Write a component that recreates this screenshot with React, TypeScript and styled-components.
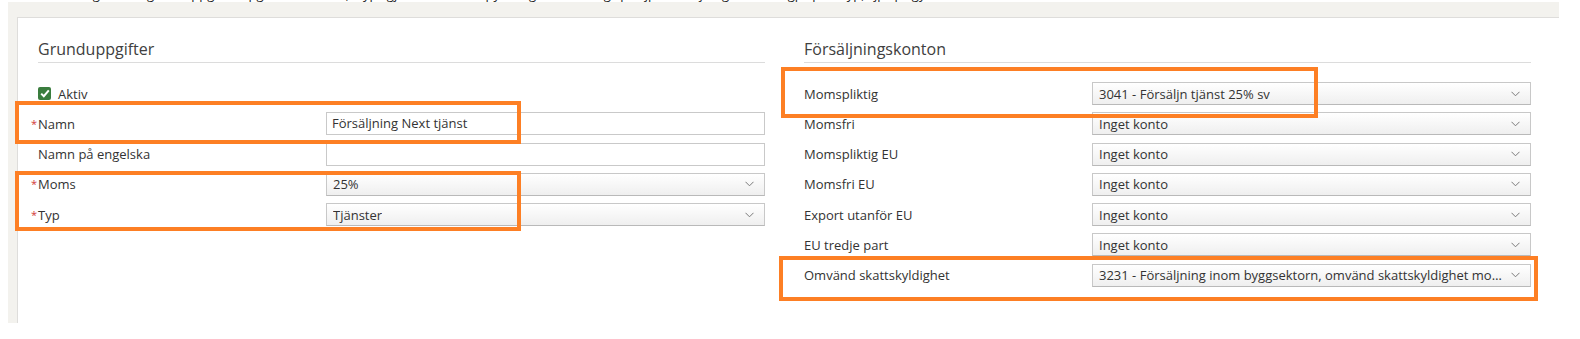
import React from "react";
import styled, { createGlobalStyle } from "styled-components";

const GlobalStyle = createGlobalStyle`
    body {
        margin: 0;
        background: #ffffff;
        font-family: "Open Sans", "Liberation Sans", sans-serif;
        color: #333333;
    }
`;

const Page = styled.div`
    position: relative;
    width: 1580px;
    height: 339px;
    overflow: hidden;
`;

const CutLine = styled.div`
    height: 2px;
    overflow: hidden;
    padding-left: 46px;

    span {
        display: block;
        margin-top: -14px;
        font-size: 13px;
        line-height: 16px;
        color: #222;
        white-space: nowrap;
        word-spacing: 6px;
    }
`;

const Backdrop = styled.div`
    margin-left: 8px;
    width: 1551px;
    height: 321px;
    box-sizing: border-box;
    padding: 15px 0 0 9px;
    background: #f3f2ee;
    display: flex;
`;

const Panel = styled.div`
    flex: 1;
    background: #ffffff;
    border-top: 1px solid #dedddb;
    border-left: 1px solid #dedddb;
    padding: 21px 0 0 20px;
    display: flex;
    gap: 39px;
`;

const Column = styled.div`
    width: 727px;
    display: flex;
    flex-direction: column;
`;

const Heading = styled.h2`
    margin: 0 0 19px;
    padding-bottom: 3px;
    border-bottom: 1px solid #dcdcdc;
    font-size: 16px;
    line-height: 20px;
    font-weight: 400;
    color: #404040;
`;

const Rows = styled.div`
    display: flex;
    flex-direction: column;
    gap: 7.3px;
`;

const Row = styled.div`
    display: grid;
    grid-template-columns: 288px minmax(0, 1fr);
    align-items: center;
    height: 23px;
`;

const Label = styled.span<{ $required?: boolean }>`
    position: relative;
    font-size: 13px;
    color: #333;

    &::before {
        content: ${(p) => (p.$required ? '"*"' : "none")};
        position: absolute;
        left: -7px;
        top: 1px;
        color: #d23a3a;
        font-size: 11px;
    }
`;

const CheckRow = styled.label`
    display: flex;
    align-items: center;
    gap: 7px;
    height: 23px;
    font-size: 13px;
    color: #333;
`;

const CheckBox = styled.span`
    width: 13px;
    height: 13px;
    border-radius: 2px;
    background: #3a7d3e;
    display: flex;
    align-items: center;
    justify-content: center;
`;

const TextInput = styled.div`
    height: 23px;
    box-sizing: border-box;
    border: 1px solid #c9c9c9;
    background: #fff;
    padding: 0 5px;
    font-size: 13px;
    line-height: 21px;
    color: #333;
`;

const SelectBox = styled.div`
    min-width: 0;
    height: 23px;
    box-sizing: border-box;
    border: 1px solid #c8c8c8;
    border-bottom-color: #b9b9b9;
    background: linear-gradient(#ffffff, #efefef);
    padding: 0 10px 0 6px;
    display: flex;
    align-items: center;
    justify-content: space-between;
    gap: 6px;
    font-size: 13px;
    color: #333;

    span {
        min-width: 0;
        overflow: hidden;
        white-space: nowrap;
        text-overflow: ellipsis;
    }

    svg {
        flex-shrink: 0;
    }
`;

const Annotation = styled.div<{ $x: number; $y: number; $w: number; $h: number }>`
    position: absolute;
    left: ${(p) => p.$x}px;
    top: ${(p) => p.$y}px;
    width: ${(p) => p.$w}px;
    height: ${(p) => p.$h}px;
    box-sizing: border-box;
    border: 4px solid #fd7f24;
    pointer-events: none;
`;

const Chevron = () => (
    <svg width="9" height="6" viewBox="0 0 9 6">
        <polyline points="0.5,0.8 4.5,4.8 8.5,0.8" fill="none" stroke="#7a7a7a" strokeWidth="1" />
    </svg>
);

const Check = () => (
    <svg width="10" height="9" viewBox="0 0 10 9">
        <polyline points="1.2,4.6 3.8,7.2 8.8,1.4" fill="none" stroke="#fff" strokeWidth="2" />
    </svg>
);

const Select = ({ value }: { value: string }) => (
    <SelectBox>
        <span>{value}</span>
        <Chevron />
    </SelectBox>
);

const accounts: [string, string][] = [
    ["Momspliktig", "3041 - Försäljn tjänst 25% sv"],
    ["Momsfri", "Inget konto"],
    ["Momspliktig EU", "Inget konto"],
    ["Momsfri EU", "Inget konto"],
    ["Export utanför EU", "Inget konto"],
    ["EU tredje part", "Inget konto"],
    ["Omvänd skattskyldighet", "3231 - Försäljning inom byggsektorn, omvänd skattskyldighet moms 25%"],
];

const App = () => {
    return (
        <>
            <GlobalStyle />
            <Page>
                <CutLine>
                    <span>
                        Här anger du grunduppgifter pg för artikeln, typ gj och moms py. Ange kontering på jp försäljningskonton gp per typ, jp p gy
                    </span>
                </CutLine>
                <Backdrop>
                    <Panel>
                        <Column>
                            <Heading>Grunduppgifter</Heading>
                            <Rows>
                                <CheckRow>
                                    <CheckBox>
                                        <Check />
                                    </CheckBox>
                                    Aktiv
                                </CheckRow>
                                <Row>
                                    <Label $required>Namn</Label>
                                    <TextInput>Försäljning Next tjänst</TextInput>
                                </Row>
                                <Row>
                                    <Label>Namn på engelska</Label>
                                    <TextInput />
                                </Row>
                                <Row>
                                    <Label $required>Moms</Label>
                                    <Select value="25%" />
                                </Row>
                                <Row>
                                    <Label $required>Typ</Label>
                                    <Select value="Tjänster" />
                                </Row>
                            </Rows>
                        </Column>
                        <Column>
                            <Heading>Försäljningskonton</Heading>
                            <Rows>
                                {accounts.map(([label, value]) => (
                                    <Row key={label}>
                                        <Label>{label}</Label>
                                        <Select value={value} />
                                    </Row>
                                ))}
                            </Rows>
                        </Column>
                    </Panel>
                </Backdrop>
                <Annotation $x={15} $y={101} $w={506} $h={43} />
                <Annotation $x={15} $y={171} $w={506} $h={60} />
                <Annotation $x={781} $y={67} $w={537} $h={51} />
                <Annotation $x={779} $y={256} $w={759} $h={45} />
            </Page>
        </>
    );
};

export default App;
